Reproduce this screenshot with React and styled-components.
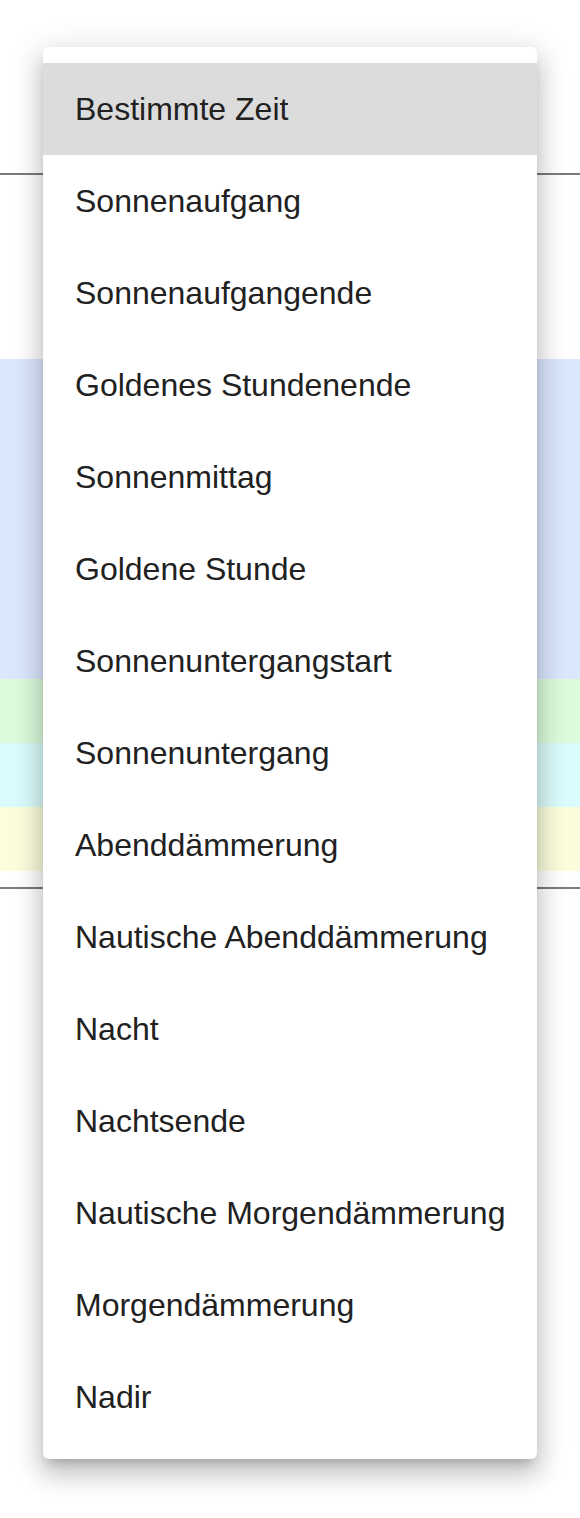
import React from "react"
import styled, { createGlobalStyle } from "styled-components"

const GlobalStyle = createGlobalStyle`
  html, body {
    margin: 0;
    padding: 0;
    background: #ffffff;
    font-family: "Liberation Sans", Arial, Helvetica, sans-serif;
  }
`

const rows = [
  "#dbe7fd",
  "#dbe7fd",
  "#dbe7fd",
  "#dbe7fd",
  "#dbe7fd",
  "#dcfbdc",
  "#dbfcfc",
  "#fbfddc",
]

const options = [
  "Bestimmte Zeit",
  "Sonnenaufgang",
  "Sonnenaufgangende",
  "Goldenes Stundenende",
  "Sonnenmittag",
  "Goldene Stunde",
  "Sonnenuntergangstart",
  "Sonnenuntergang",
  "Abenddämmerung",
  "Nautische Abenddämmerung",
  "Nacht",
  "Nachtsende",
  "Nautische Morgendämmerung",
  "Morgendämmerung",
  "Nadir",
]

function App() {
  return (
    <Page>
      <GlobalStyle />
      <Header />
      <Table>
        {rows.map((c, i) => (
          <Row key={i} $bg={c} />
        ))}
      </Table>
      <Footer />
      <Menu>
        {options.map((o, i) => (
          <MenuItem key={o} $selected={i === 0}>
            {o}
          </MenuItem>
        ))}
      </Menu>
    </Page>
  )
}

/// styled components

const Page = styled.div`
  position: relative;
  width: 580px;
  height: 1518px;
  display: flex;
  flex-direction: column;
  overflow: hidden;
`
const Header = styled.div`
  height: 173px;
  border-bottom: 2px solid #7a7a7a;
`
const Table = styled.div`
  display: flex;
  flex-direction: column;
  padding-top: 184px;
  padding-bottom: 16px;
`
const Row = styled.div`
  height: 64px;
  background: ${props => props.$bg};
`
const Footer = styled.div`
  border-top: 2px solid #7a7a7a;
`
const Menu = styled.ul`
  position: absolute;
  top: 47px;
  left: 43px;
  width: 494px;
  margin: 0;
  padding: 16px 0;
  list-style: none;
  background: #ffffff;
  border-radius: 6px;
  box-shadow: 0px 8px 10px -5px rgba(0, 0, 0, 0.2),
    0px 16px 24px 2px rgba(0, 0, 0, 0.14),
    0px 6px 30px 5px rgba(0, 0, 0, 0.12);
`
const MenuItem = styled.li`
  height: 92px;
  display: flex;
  align-items: center;
  padding: 0 32px;
  font-size: 32px;
  color: #212121;
  background: ${props => (props.$selected ? "#dcdcdc" : "transparent")};
  white-space: nowrap;
`

export default App
